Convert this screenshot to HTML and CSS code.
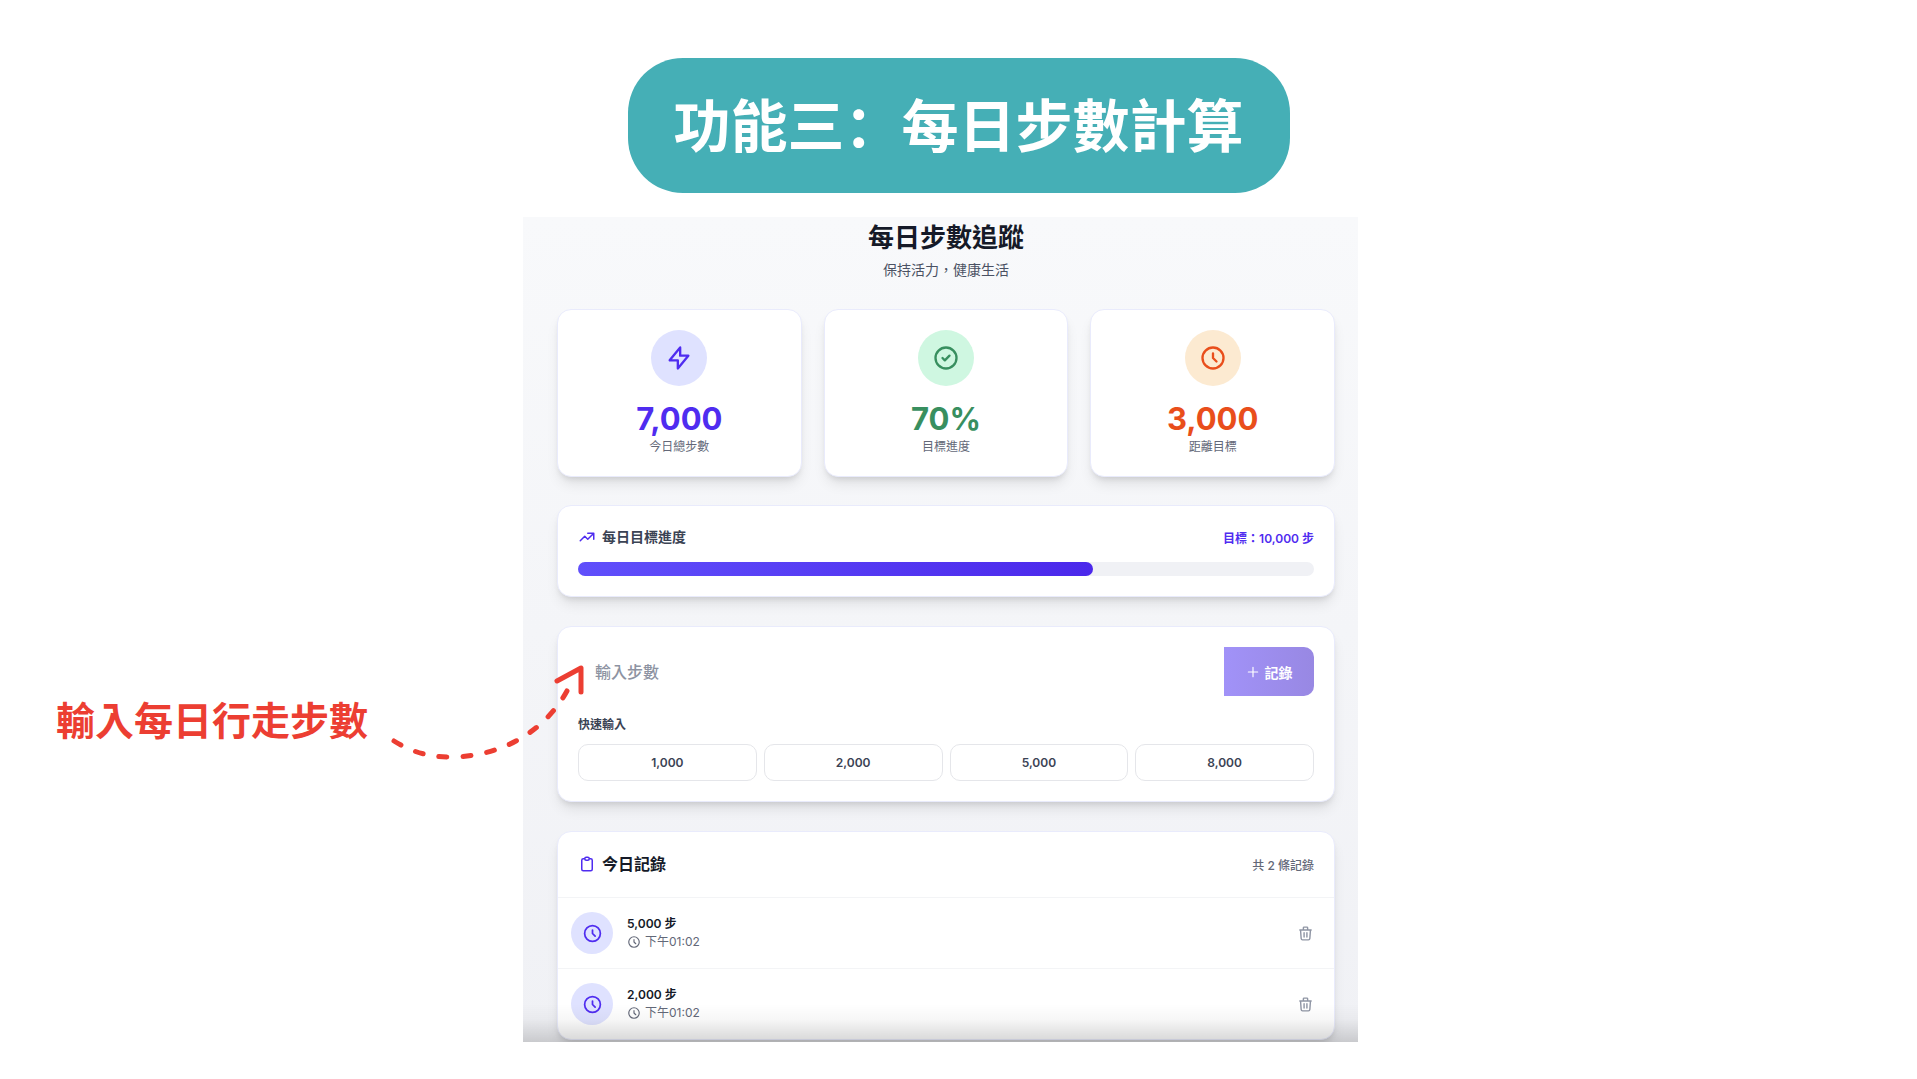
FILE: index.html
```html
<!DOCTYPE html>
<html lang="zh-Hant">
<head>
  <meta charset="UTF-8">
  <meta name="viewport" content="width=device-width, initial-scale=1.0">
  <title>每日步數追蹤</title>
  <link rel="stylesheet" href="styles.css">
</head>
<body>

  <!-- shared icons -->
  <svg class="sprite" aria-hidden="true">
    <symbol id="icon-clock" viewBox="0 0 24 24"><path d="M12 8v4l3 3m6-3a9 9 0 11-18 0 9 9 0 0118 0z"/></symbol>
    <symbol id="icon-trash" viewBox="0 0 24 24"><path d="M19 7l-.867 12.142A2 2 0 0116.138 21H7.862a2 2 0 01-1.995-1.858L5 7m5 4v6m4-6v6m1-10V4a1 1 0 00-1-1h-4a1 1 0 00-1 1v3M4 7h16"/></symbol>
  </svg>

  <header class="slide-header">
    <h1 class="slide-title" lang="zh-Hans">功能三：每日步數計算</h1>
  </header>

  <main class="slide">
    <aside class="note">
      <p class="note-text">輸入每日行走步數</p>
      <svg class="note-arrow" width="200" height="110" viewBox="0 0 200 110" aria-hidden="true">
        <path class="dashes" d="M10 84C26 94 43 100 66 100C120 100 163 72 184 32"/>
        <path d="M173 24L197 11L197 35"/>
      </svg>
    </aside>

    <section class="app">
      <div class="app-header">
        <h2>每日步數追蹤</h2>
        <p>保持活力，健康生活</p>
      </div>

      <div class="stats">
        <div class="card stat indigo">
          <div class="stat-icon">
            <svg class="icon" viewBox="0 0 24 24"><path d="M13 10V3L4 14h7v7l9-11h-7z"/></svg>
          </div>
          <div class="stat-value">7,000</div>
          <div class="stat-label">今日總步數</div>
        </div>
        <div class="card stat green">
          <div class="stat-icon">
            <svg class="icon" viewBox="0 0 24 24"><path d="M9 12l2 2 4-4m6 2a9 9 0 11-18 0 9 9 0 0118 0z"/></svg>
          </div>
          <div class="stat-value">70%</div>
          <div class="stat-label">目標進度</div>
        </div>
        <div class="card stat orange">
          <div class="stat-icon">
            <svg class="icon"><use href="#icon-clock"/></svg>
          </div>
          <div class="stat-value">3,000</div>
          <div class="stat-label">距離目標</div>
        </div>
      </div>

      <div class="card progress">
        <div class="progress-header">
          <h3>
            <svg class="icon" viewBox="0 0 24 24"><path d="M13 7h8m0 0v8m0-8l-8 8-4-4-6 6"/></svg>
            每日目標進度
          </h3>
          <span class="goal">目標：10,000 步</span>
        </div>
        <div class="bar">
          <div class="bar-fill" style="width: 70%;"></div>
        </div>
      </div>

      <form class="card entry">
        <div class="entry-row">
          <input type="text" inputmode="numeric" placeholder="輸入步數" aria-label="輸入步數">
          <button type="submit" class="record-btn" disabled>
            <svg class="icon" viewBox="0 0 24 24"><path d="M12 4v16m-8-8h16"/></svg>
            記錄
          </button>
        </div>
        <p class="quick-label">快速輸入</p>
        <div class="quick">
          <button type="button">1,000</button>
          <button type="button">2,000</button>
          <button type="button">5,000</button>
          <button type="button">8,000</button>
        </div>
      </form>

      <div class="card records">
        <div class="records-header">
          <h3>
            <svg class="icon" viewBox="0 0 24 24"><path d="M9 5H7a2 2 0 00-2 2v12a2 2 0 002 2h10a2 2 0 002-2V7a2 2 0 00-2-2h-2M9 5a2 2 0 002 2h2a2 2 0 002-2M9 5a2 2 0 012-2h2a2 2 0 012 2"/></svg>
            今日記錄
          </h3>
          <span class="count">共 2 條記錄</span>
        </div>
        <ul>
          <li>
            <div class="record-icon"><svg class="icon"><use href="#icon-clock"/></svg></div>
            <div class="record-info">
              <div class="steps">5,000 步</div>
              <div class="time"><svg class="icon"><use href="#icon-clock"/></svg>下午01:02</div>
            </div>
            <button type="button" class="delete-btn" aria-label="刪除"><svg class="icon"><use href="#icon-trash"/></svg></button>
          </li>
          <li>
            <div class="record-icon"><svg class="icon"><use href="#icon-clock"/></svg></div>
            <div class="record-info">
              <div class="steps">2,000 步</div>
              <div class="time"><svg class="icon"><use href="#icon-clock"/></svg>下午01:02</div>
            </div>
            <button type="button" class="delete-btn" aria-label="刪除"><svg class="icon"><use href="#icon-trash"/></svg></button>
          </li>
        </ul>
      </div>
    </section>
  </main>

</body>
</html>
```

FILE: styles.css
```css
:root {
  --indigo: #4f2cf0;
  --green: #388f5f;
  --orange: #e94e1b;
  --red: #ec3e32;
  --text: #151a28;
  --text-mid: #3b4354;
  --text-muted: #636878;
}

* {
  box-sizing: border-box;
}

body {
  margin: 0;
  background: #fff;
  color: var(--text);
  font-family: Inter, "Noto Sans CJK TC", sans-serif;
}

h1, h2, h3, p, ul {
  margin: 0;
  padding: 0;
}

button, input {
  font-family: inherit;
}

.sprite {
  display: none;
}

.icon {
  flex: none;
  fill: none;
  stroke: currentColor;
  stroke-width: 2;
  stroke-linecap: round;
  stroke-linejoin: round;
}

/* slide */
.slide-header {
  display: flex;
  justify-content: center;
  padding-top: 58px;
}

.slide-title {
  padding: 24px 46px 31px;
  border-radius: 55px;
  background: #45afb6;
  color: #fff;
  font-family: "Noto Sans CJK SC", sans-serif;
  font-size: 57px;
  line-height: 80px;
  font-weight: 700;
}

.slide {
  display: grid;
  grid-template-columns: 523fr 835fr 559fr;
  margin-top: 24px;
}

.note {
  position: relative;
  padding: 473px 155px 0 0;
  text-align: right;
  z-index: 1;
}

.note-text {
  color: var(--red);
  font-family: "Noto Sans CJK TC", sans-serif;
  font-size: 39px;
  line-height: 56px;
  font-weight: 700;
  white-space: nowrap;
}

.note-arrow {
  position: absolute;
  top: 440px;
  right: -61px;
  fill: none;
  stroke: var(--red);
  stroke-width: 5;
  stroke-linecap: round;
  stroke-linejoin: round;
}

.note-arrow .dashes {
  stroke-dasharray: 8 16;
}

/* app */
.app {
  position: relative;
  padding: 3px 23px 2px 34px;
  background: linear-gradient(#f8f9fb, #f0f1f5);
}

/* dark fade along the bottom edge */
.app::after {
  content: "";
  position: absolute;
  left: 0;
  right: 0;
  bottom: 0;
  height: 38px;
  background: linear-gradient(transparent, rgba(0,0,0,0.03) 40%, rgba(0,0,0,0.16));
  pointer-events: none;
}

.app-header {
  margin-bottom: 28px;
  text-align: center;
}

.app-header h2 {
  font-size: 26px;
  line-height: 36px;
  font-weight: 700;
}

.app-header p {
  margin-top: 4px;
  padding-bottom: 1px;
  color: #4a5163;
  font-size: 14px;
  line-height: 20px;
}

.card {
  border: 1px solid #e9ebfc;
  border-radius: 14px;
  background: #fff;
  box-shadow: 0 9px 14px -3px rgba(0,0,0,0.1), 0 4px 6px -3px rgba(0,0,0,0.12);
}

.card + .card {
  margin-top: 29px;
}

.stats {
  display: grid;
  grid-template-columns: repeat(3, 1fr);
  gap: 22px;
  margin-bottom: 28px;
}

.stats .card {
  margin: 0;
}

.stat {
  padding: 20px 20px 19px;
  text-align: center;
}

.stat-icon {
  display: flex;
  align-items: center;
  justify-content: center;
  width: 56px;
  height: 56px;
  margin: 0 auto 15px;
  border-radius: 50%;
}

.stat-icon .icon {
  width: 28px;
  height: 28px;
}

.indigo {
  color: var(--indigo);
}

.indigo .stat-icon {
  background: #dfe2ff;
}

.green {
  color: var(--green);
}

.green .stat-icon {
  background: #cff7e1;
}

.orange {
  color: var(--orange);
}

.orange .stat-icon {
  background: #fcead1;
}

.stat-value {
  font-size: 31px;
  line-height: 36px;
  font-weight: 700;
}

.stat-label {
  color: var(--text-muted);
  font-size: 12px;
  line-height: 20px;
}

/* goal progress */
.progress {
  padding: 19px 20px 20px;
}

.progress-header,
.records-header {
  display: flex;
  align-items: center;
  justify-content: space-between;
}

.progress-header {
  margin-bottom: 13px;
}

h3 {
  display: flex;
  align-items: center;
  gap: 6px;
  line-height: 24px;
}

h3 .icon {
  width: 18px;
  height: 18px;
  color: var(--indigo);
}

.progress h3 {
  color: var(--text-mid);
  font-size: 14px;
  font-weight: 600;
}

.goal {
  color: var(--indigo);
  font-size: 12px;
  font-weight: 600;
}

.bar {
  height: 14px;
  border-radius: 7px;
  background: #f0f1f5;
}

.bar-fill {
  height: 100%;
  border-radius: 7px;
  background: linear-gradient(90deg, #604ffb, #4b28eb);
}

/* step entry */
.entry {
  padding: 20px;
}

.entry-row {
  display: flex;
}

.entry-row input {
  flex: 1;
  min-width: 0;
  padding: 0 17px;
  border: 0;
  background: transparent;
  color: var(--text);
  font-size: 16px;
  font-weight: 500;
}

.entry-row input::placeholder {
  color: #8d93a2;
}

.record-btn {
  display: flex;
  align-items: center;
  justify-content: center;
  gap: 5px;
  width: 90px;
  height: 49px;
  padding: 0;
  border: 0;
  border-radius: 0 10px 10px 0;
  background: linear-gradient(90deg, #a192f8, #9888e3);
  color: #fff;
  font-size: 14px;
  font-weight: 600;
}

.record-btn .icon {
  width: 14px;
  height: 14px;
}

.quick-label {
  margin: 20px 0 10px;
  color: var(--text-mid);
  font-size: 12px;
  line-height: 18px;
  font-weight: 600;
}

.quick {
  display: grid;
  grid-template-columns: repeat(4, 1fr);
  gap: 7px;
}

.quick button {
  height: 37px;
  border: 1px solid #e5e6ea;
  border-radius: 10px;
  background: #fff;
  color: var(--text-mid);
  font-size: 12px;
  font-weight: 600;
  cursor: pointer;
}

/* today's records */
.records-header {
  padding: 20px 20px 21px;
}

.records h3 {
  font-size: 16px;
  font-weight: 600;
}

.count {
  color: var(--text-muted);
  font-size: 12px;
  font-weight: 500;
}

.records ul {
  list-style: none;
}

.records li {
  display: flex;
  align-items: center;
  gap: 14px;
  padding: 14px 20px 14px 13px;
  border-top: 1px solid #f3f4f6;
}

.record-icon {
  display: flex;
  align-items: center;
  justify-content: center;
  width: 42px;
  height: 42px;
  border-radius: 50%;
  background: #dfe2ff;
  color: var(--indigo);
}

.record-icon .icon {
  width: 21px;
  height: 21px;
}

.record-info {
  flex: 1;
  font-size: 12px;
  line-height: 18px;
}

.steps {
  font-weight: 600;
}

.time {
  display: flex;
  align-items: center;
  gap: 4px;
  color: var(--text-muted);
}

.time .icon {
  width: 14px;
  height: 14px;
}

.delete-btn {
  display: flex;
  padding: 0;
  border: 0;
  background: none;
  color: #8f95a4;
  cursor: pointer;
}

.delete-btn .icon {
  width: 17px;
  height: 17px;
}
```
